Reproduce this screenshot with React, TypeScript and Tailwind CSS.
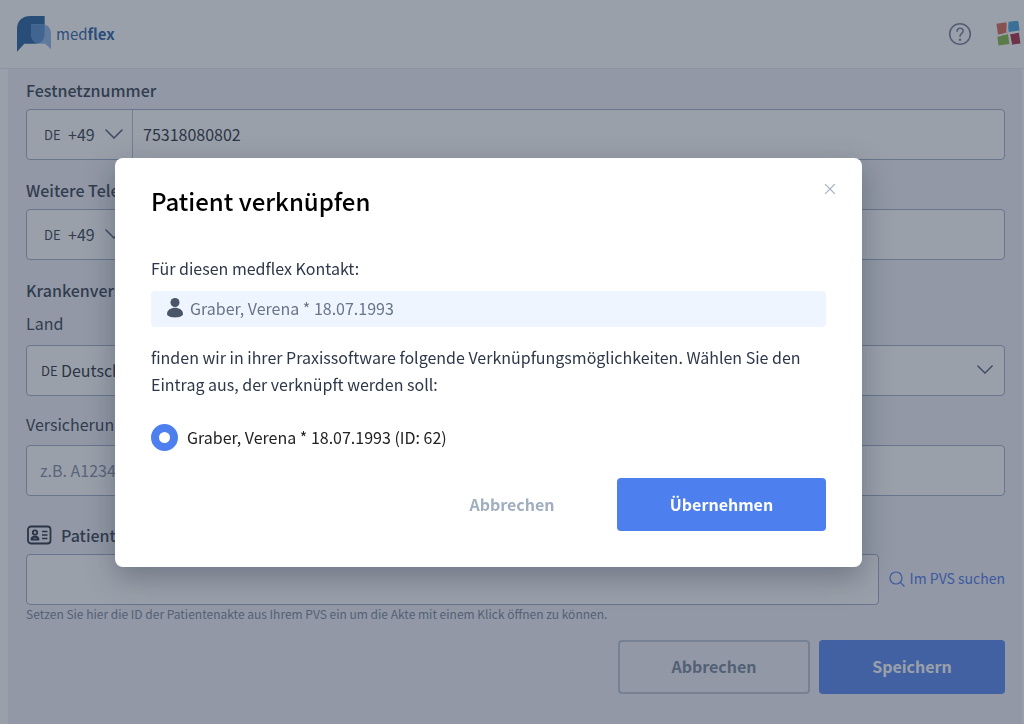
import { useState } from 'react';

const fieldBorder = 'rounded border border-[#9aa8be] bg-white';

function Logo() {
  return (
    <a href="#" className="flex items-center gap-[5px] text-[15px] leading-6 text-[#1f5a9f]">
      <svg width="34" height="36" viewBox="0 0 102 108" aria-hidden="true">
        <path d="M0 107V40C0 14 16 0 41 0H83V50C83 70 72 83 54 83H22Z" fill="#1b5896" />
        <path d="M42 25H74C92 25 102 36 102 53V100L85 83H74C53 83 42 70 42 52Z" fill="#8ab2e6" />
        <path d="M42 25H74C78 25 80 25 83 27V50C83 70 72 83 60 82C48 78 42 67 42 52Z" fill="#4f86cc" />
      </svg>
      <span>
        med<b>flex</b>
      </span>
    </a>
  );
}

function HelpIcon() {
  return (
    <svg width="24" height="24" viewBox="0 0 24 24" fill="none" stroke="#717a98" strokeWidth="1.6" strokeLinecap="round">
      <circle cx="12" cy="12" r="10.3" />
      <path d="M9.1 9.2C9.1 7.3 10.3 6.2 12.1 6.2S15.2 7.4 15.2 9C15.2 11.4 12 11.4 12 14.3" />
      <circle cx="12" cy="17.7" r="0.5" fill="#717a98" />
    </svg>
  );
}

function ClinicLogo() {
  return (
    <svg width="26" height="26" viewBox="0 0 26 26">
      <g transform="rotate(-8 13 13)">
        <rect x="2" y="1" width="10" height="11" fill="#d8604f" />
        <rect x="13" y="1" width="11" height="10" fill="#3f9fd8" />
        <rect x="1" y="13" width="11" height="10" fill="#80b63a" />
        <rect x="14" y="13" width="9" height="11" fill="#a4203a" />
        <path d="M13.5 1L11 12L1 13.5M12 13L24 12M13 13L14 24" stroke="#fff" strokeWidth="1.5" fill="none" />
      </g>
    </svg>
  );
}

function Chevron({ className = '' }: { className?: string }) {
  return (
    <svg className={`pointer-events-none shrink-0 ${className}`} viewBox="0 0 18 10" fill="none" stroke="#4a5575" strokeWidth="1.6" strokeLinecap="round">
      <path d="M1 1L9 9L17 1" />
    </svg>
  );
}

function IdCardIcon() {
  return (
    <svg width="26" height="20" viewBox="0 0 26 20" fill="none" stroke="#1f2838" strokeWidth="1.8">
      <rect x="2" y="1.5" width="22.5" height="17" rx="3" />
      <circle cx="9" cy="7.5" r="2.2" />
      <path d="M5.5 14.5C5.5 10.8 12.5 10.8 12.5 14.5Z" strokeLinejoin="round" />
      <path d="M16 6.5H21.5M16 10H21.5M16 13.5H21.5" strokeWidth="1.5" />
    </svg>
  );
}

function PhoneField({ id, label, value }: { id: string; label: string; value: string }) {
  return (
    <div className="mb-[18px]">
      <label htmlFor={id} className="mb-[7px] block font-medium leading-6">
        {label}
      </label>
      <div className={`flex h-[51px] ${fieldBorder}`}>
        <div className="relative flex w-[106px] shrink-0 items-center border-r border-[#b4bccd] pb-0.5 pl-[17px]">
          <span className="w-6 pt-0.5 text-[13px]">DE</span>
          <select aria-label={`Vorwahl ${label}`} className="h-full flex-1 appearance-none bg-transparent outline-none">
            <option>+49</option>
          </select>
          <Chevron className="absolute right-[9px] h-[10px] w-[18px]" />
        </div>
        <input id={id} type="tel" defaultValue={value} className="min-w-0 flex-1 bg-transparent px-2.5 pb-0.5 text-[#222832] outline-none" />
      </div>
    </div>
  );
}

function PatientForm() {
  return (
    <form className="ml-2 mr-0.5 bg-[#eeeff4] pb-[30px] pl-[18px] pr-[17px] pt-[9px]">
      <PhoneField id="festnetz" label="Festnetznummer" value="75318080802" />
      <PhoneField id="weitere" label="Weitere Telefonnummer" value="" />

      <h2 className="mb-[9px] font-medium leading-6">Krankenversicherung</h2>
      <label htmlFor="land" className="mb-2.5 block leading-6">
        Land
      </label>
      <div className={`relative mb-4 flex h-[51px] items-center pb-0.5 pl-3.5 text-[#222832] ${fieldBorder}`}>
        <span className="w-5 pt-0.5 text-[13px]">DE</span>
        <select id="land" className="h-full flex-1 appearance-none bg-transparent outline-none">
          <option>Deutschland</option>
        </select>
        <Chevron className="absolute right-[11px] h-[9px] w-4" />
      </div>

      <label htmlFor="versicherung" className="mb-[9px] block leading-6">
        Versicherungsnummer
      </label>
      <input
        id="versicherung"
        placeholder="z.B. A123456789"
        className={`mb-[27px] block h-[51px] w-full px-[13px] pb-0.5 outline-none placeholder:text-[#7c8aa0] ${fieldBorder}`}
      />

      <label htmlFor="patient-id" className="mb-[7px] flex items-center gap-[9px] font-medium leading-6">
        <IdCardIcon />
        Patienten-ID
      </label>
      <div className="flex items-center gap-2.5">
        <input id="patient-id" className={`h-[51px] min-w-0 flex-1 px-3 outline-none ${fieldBorder}`} />
        <a href="#" className="flex items-center gap-[5px] pb-0.5 text-[14px] text-[#4572ea]">
          <svg width="16" height="16" viewBox="0 0 16 16" fill="none" stroke="currentColor" strokeWidth="1.2" strokeLinecap="round">
            <circle cx="7" cy="7" r="6" />
            <path d="M11.3 11.3L15 15" />
          </svg>
          Im PVS suchen
        </a>
      </div>
      <p className="text-[12px] leading-[17px] text-[#718096]">
        Setzen Sie hier die ID der Patientenakte aus Ihrem PVS ein um die Akte mit einem Klick öffnen zu können.
      </p>
      <div className="mt-[18px] flex justify-end gap-[9px]">
        <button type="button" className="h-[54px] w-[192px] rounded border-2 border-[#b9c1d2] pb-0.5 font-bold text-[#718096]">
          Abbrechen
        </button>
        <button type="button" className="h-[54px] w-[186px] rounded bg-[#4d80ee] pb-0.5 font-bold text-white">
          Speichern
        </button>
      </div>
    </form>
  );
}

function LinkPatientDialog({ onClose }: { onClose: () => void }) {
  return (
    <div className="fixed inset-0 overflow-auto bg-[#354155]/50 pl-[115px] pr-[162px] pt-[158px]">
      <div
        role="dialog"
        aria-modal="true"
        aria-labelledby="dialog-title"
        className="rounded-lg bg-white px-9 pb-9 pt-[25px] shadow-[0_10px_30px_rgba(30,40,60,0.35)]"
      >
        <div className="flex items-start justify-between">
          <h1 id="dialog-title" className="text-2xl font-medium leading-9 text-black">
            Patient verknüpfen
          </h1>
          <button type="button" aria-label="Schließen" onClick={onClose} className="-mr-3.5 -mt-1 flex size-5 items-center justify-center">
            <svg width="10" height="10" viewBox="0 0 10 10" stroke="#a0aec0" strokeWidth="1.1">
              <path d="M0 0L10 10M10 0L0 10" />
            </svg>
          </button>
        </div>

        <p className="mt-9 leading-[27px]">Für diesen medflex Kontakt:</p>
        <div className="mt-[9px] flex h-9 items-center gap-1.5 rounded bg-[#eef5fe] pb-0.5 pl-[15px] text-[#687489]">
          <svg width="18" height="20" viewBox="0 0 18 20" fill="#4a5568" aria-hidden="true">
            <circle cx="9" cy="4.5" r="4.5" />
            <path d="M1 16C1 7.500 17 7.500 17 16C17 20.500 1 20.500 1 16Z" />
          </svg>
          Graber, Verena * 18.07.1993
        </div>
        <p className="mt-[17px] leading-[27px]">
          finden wir in ihrer Praxissoftware folgende Verknüpfungsmöglichkeiten. Wählen Sie den Eintrag aus, der verknüpft
          werden soll:
        </p>

        <label className="mt-[26px] flex items-center gap-[9px] leading-[27px] text-[#222]">
          <input
            type="radio"
            name="eintrag"
            defaultChecked
            className="size-[27px] shrink-0 appearance-none rounded-full border-8 border-[#4d80ee] bg-white"
          />
          Graber, Verena * 18.07.1993 (ID: 62)
        </label>

        <div className="mt-[27px] flex justify-end">
          <button type="button" onClick={onClose} className="h-[53px] w-[210px] pb-0.5 font-bold text-[#a0aec0]">
            Abbrechen
          </button>
          <button type="button" onClick={onClose} className="h-[53px] w-[209px] rounded bg-[#4d80ee] pb-0.5 font-bold text-white">
            Übernehmen
          </button>
        </div>
      </div>
    </div>
  );
}

export default function App() {
  const [open, setOpen] = useState(true);

  return (
    <div className="min-h-screen bg-white font-['Noto_Sans_CJK_SC','Noto_Sans',sans-serif] text-[16px] text-[#2d3748]">
      <header className="flex h-[69px] items-center justify-between border-b border-[#e2e5ec] pl-[17px] pr-0.5">
        <Logo />
        <div className="flex items-center gap-6">
          <button type="button" aria-label="Hilfe">
            <HelpIcon />
          </button>
          <button type="button" aria-label="Praxis">
            <ClinicLogo />
          </button>
        </div>
      </header>
      <PatientForm />
      {open && <LinkPatientDialog onClose={() => setOpen(false)} />}
    </div>
  );
}
